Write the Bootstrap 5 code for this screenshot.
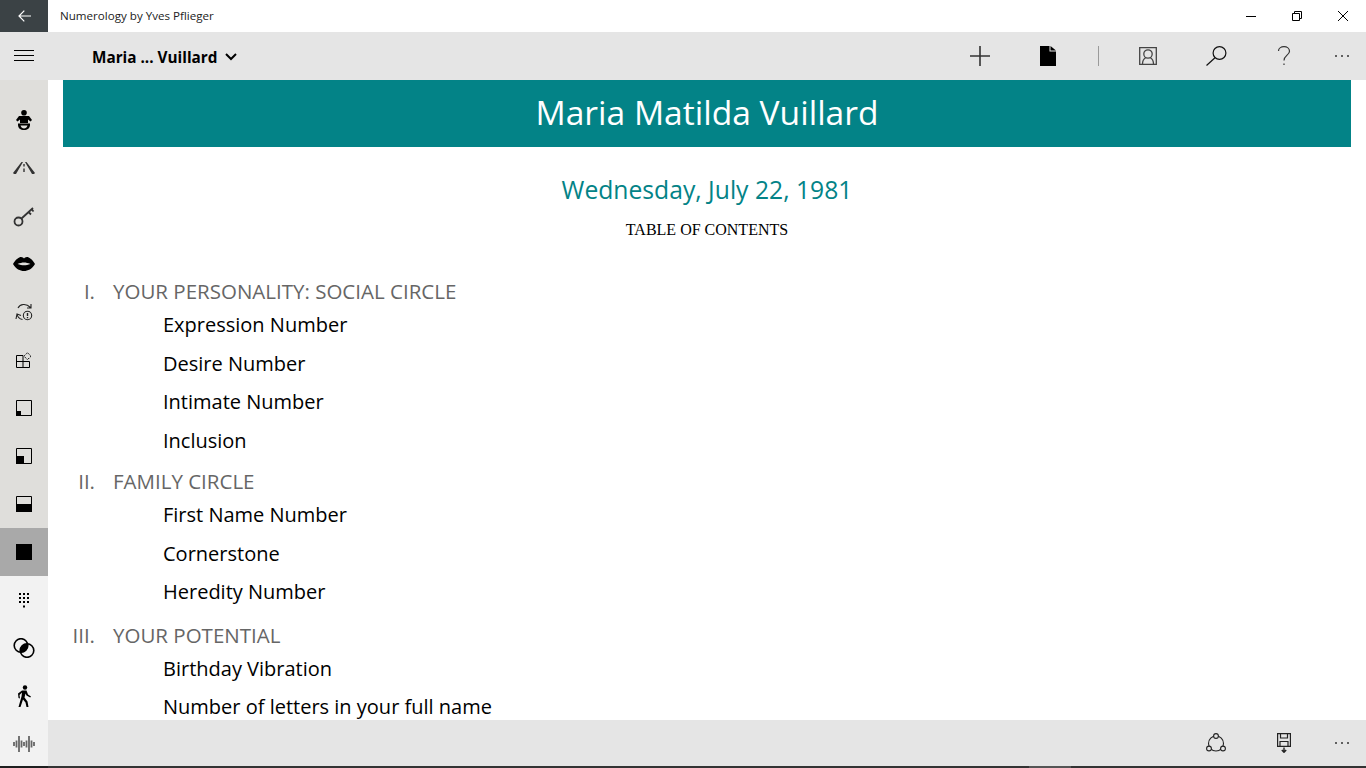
<!doctype html>
<html>
<head>
  <title>Numerology by Yves Pflieger</title>
  <link href="https://cdn.jsdelivr.net/npm/bootstrap@5.3.0/dist/css/bootstrap.min.css" rel="stylesheet">
  <style>
    html, body { height: 100%; overflow: hidden; }
    body { font-family: "Open Sans", "Noto Sans", sans-serif; color: #000; background: #fff; }
    .app-shell { width: 1366px; height: 768px; }
    .title-bar { height: 32px; background: #fff; }
    .back-box { width: 48px; height: 32px; background: #3b4245; }
    .app-title { font-size: 11.6px; margin-left: 12px; color: #222; }
    .win-btn { width: 46px; height: 32px; }
    .tool-bar { height: 48px; background: #e5e5e5; }
    .tool-btn { width: 68px; height: 48px; }
    .tool-last { width: 48px; }
    .burger { width: 48px; height: 48px; }
    .person-name { font-size: 15.3px; font-weight: 700; margin-left: 44px; padding-top: 2px; }
    .tool-gap { width: 32px; height: 20px; }
    .tool-sep { width: 1px; height: 20px; background: #9a9a9a; }
    .body-row { height: 686px; }
    .side-rail { width: 48px; }
    .rail-top { background: #dfdedb; height: 496px; padding-top: 16px; }
    .rail-low { background: #f2f2f2; height: 190px; }
    .rail-btn { height: 48px; }
    .rail-btn.is-active { background: #a9a9a9; }
    .doc-pane { height: 640px; overflow: hidden; padding: 0 15px; }
    .doc-banner { background: #038387; color: #fff; height: 67px; font-size: 33.6px; line-height: 64px; text-align: center; }
    .doc-date { color: #038387; font-size: 24.7px; line-height: 32px; text-align: center; margin-top: 27px; }
    .doc-toc { font-family: "Liberation Serif", serif; font-size: 16px; line-height: 20px; text-align: center; margin-top: 14px; margin-bottom: 37px; }
    .sec-row { display: flex; color: #666; font-size: 20.5px; line-height: 28px; padding-bottom: 6.4px; }
    .sec-near { padding-top: 2px; }
    .sec-far { padding-top: 4px; }
    .sec-num { width: 32px; text-align: right; margin-right: 18px; }
    .sub-item { font-size: 20px; line-height: 28px; padding-left: 100px; margin-bottom: 10.4px; }
    .bottom-bar { height: 46px; background: #e5e5e5; }
    .task-edge { height: 2px; background: #333; }
    .edge-left { width: 48px; background: #1f1f1f; }
    .edge-thumb { width: 42px; margin-left: 981px; background: #555; }
  </style>
</head>
<body>
<div class="app-shell d-flex flex-column">

  <div class="title-bar d-flex align-items-center">
    <div class="back-box d-flex align-items-center justify-content-center">
      <svg width="13" height="12" viewBox="0 0 13 12" fill="none" stroke="#fff" stroke-width="1.2"><path d="M1 6h12M6.300 .7 1 6l5.300 5.300"/></svg>
    </div>
    <div class="app-title">Numerology by Yves Pflieger</div>
    <div class="ms-auto d-flex">
      <div class="win-btn d-flex align-items-center justify-content-center">
        <svg width="10" height="10" viewBox="0 0 10 10" stroke="#000" fill="none"><path d="M0 5.500h10"/></svg>
      </div>
      <div class="win-btn d-flex align-items-center justify-content-center">
        <svg width="10" height="10" viewBox="0 0 10 10" stroke="#000" fill="none"><path d="M.5 2.500h7v7h-7zM2.500 2.500v-2h7v7h-2"/></svg>
      </div>
      <div class="win-btn d-flex align-items-center justify-content-center">
        <svg width="10" height="10" viewBox="0 0 10 10" stroke="#000" fill="none"><path d="M0 0l10 10M10 0 0 10"/></svg>
      </div>
    </div>
  </div>

  <div class="tool-bar d-flex align-items-center">
    <div class="burger d-flex align-items-center justify-content-center">
      <svg width="20" height="12" viewBox="0 0 20 12" stroke="#000" fill="none"><path d="M0 .5h20M0 5.500h20M0 10.500h20"/></svg>
    </div>
    <div class="person-name d-flex align-items-center">Maria ... Vuillard
      <svg class="ms-2" width="12" height="8" viewBox="0 0 12 8" fill="none" stroke="#000" stroke-width="2"><path d="M1 1l5 5 5-5"/></svg>
    </div>
    <div class="ms-auto d-flex align-items-center">
      <div class="tool-btn d-flex align-items-center justify-content-center">
        <svg width="20" height="20" viewBox="0 0 20 20" stroke="#333" stroke-width="1.600" fill="none"><path d="M0 10h20M10 0v20"/></svg>
      </div>
      <div class="tool-btn d-flex align-items-center justify-content-center">
        <svg width="16" height="20" viewBox="0 0 16 20"><path d="M0 0h9.500v5.500H16V20H0zM10.500 0 16 4.500h-5.500z" fill="#000"/></svg>
      </div>
      <div class="tool-gap d-flex justify-content-center"><div class="tool-sep"></div></div>
      <div class="tool-btn d-flex align-items-center justify-content-center">
        <svg width="18" height="18" viewBox="0 0 18 18" stroke="#444" stroke-width="1.300" fill="none"><path d="M.7.7h16.600v16.600H.7z"/><circle cx="9" cy="7" r="4.200"/><path d="M3.500 17c0-3.500 1.500-5.500 3.500-6.500M14.500 17c0-3.500-1.500-5.500-3.500-6.500"/></svg>
      </div>
      <div class="tool-btn d-flex align-items-center justify-content-center">
        <svg width="21" height="20" viewBox="0 0 21 20" stroke="#111" stroke-width="1.200" fill="none"><circle cx="13.500" cy="7" r="6.400"/><path d="M9 11.700.5 19.500"/></svg>
      </div>
      <div class="tool-btn d-flex align-items-center justify-content-center">
        <svg width="14" height="20" viewBox="0 0 14 20" stroke="#333" stroke-width="1.200" fill="none"><path d="M1.500 5C1.500 2.500 4 .7 7 .7s5.500 1.800 5.500 4.500C12.500 9 7 9.500 7 14.500"/><path d="M7 17.500v1.500"/></svg>
      </div>
      <div class="tool-btn tool-last d-flex align-items-center justify-content-center">
        <svg width="16" height="4" viewBox="0 0 16 4" fill="#333"><circle cx="2" cy="2" r="1"/><circle cx="8" cy="2" r="1"/><circle cx="14" cy="2" r="1"/></svg>
      </div>
    </div>
  </div>

  <div class="body-row d-flex">
    <div class="side-rail flex-shrink-0">
      <div class="rail-top">
        <div class="rail-btn d-flex align-items-center justify-content-center">
          <svg width="16" height="20" viewBox="0 0 16 20"><circle cx="8" cy="2.800" r="2.800"/><path d="M3 6h10l3 4-1.500 1.500-2.500-2V13H4V9.500l-2.500 2L0 10z"/><path fill-rule="evenodd" d="M2 13.500h12v1.500C14 18 11.500 20 8 20s-6-2-6-5zm2.500 2c.5 1.800 2 3 3.500 3s3-1.200 3.500-3z"/></svg>
        </div>
        <div class="rail-btn d-flex align-items-center justify-content-center">
          <svg width="22" height="12" viewBox="0 0 22 12" fill="#333"><path d="M0 11 8.500 0H10L3 12H1zM22 11 13.500 0H12l7 12h2zM10.300 2h1.400v2.500h-1.400zM10.300 6.500h1.400V10h-1.400z"/></svg>
        </div>
        <div class="rail-btn d-flex align-items-center justify-content-center">
          <svg width="22" height="22" viewBox="0 0 22 22" fill="none" stroke="#333" stroke-width="1.800"><circle cx="5.500" cy="16.500" r="4"/><path d="M8.500 13.500 20 3M15.500 7l2.500 2.500M18.500 4l2 2.500"/></svg>
        </div>
        <div class="rail-btn d-flex align-items-center justify-content-center">
          <svg width="22" height="14" viewBox="0 0 22 14"><path fill-rule="evenodd" d="M0 7C3 2 6 0 8 0c1.500 0 2.500 1 3 1.500C11.500 1 12.500 0 14 0c2 0 5 2 8 7-3 5-7 7-11 7S3 12 0 7zm4.500 0c2.500 1 4.500 1.300 6.500 1.300S15 8 17.500 7C15 6 13 5.500 11 5.500S7 6 4.500 7z"/></svg>
        </div>
        <div class="rail-btn d-flex align-items-center justify-content-center">
          <svg width="18" height="18" viewBox="0 0 18 18" fill="none" stroke="#222" stroke-width="1.100"><path d="M3 5C5 1 11 0 15.500 4.500M16 1v4h-4M2 11c.5 3 3 5 5.500 5.500M1 16l1-5 4 1.500"/><circle cx="12.500" cy="12.500" r="4.200"/><path d="M12.500 10v3M12.500 14v1.300" stroke-width="1.400"/></svg>
        </div>
        <div class="rail-btn d-flex align-items-center justify-content-center">
          <svg width="16" height="16" viewBox="0 0 16 16" fill="none" stroke="#000"><path d="M.5 3.500h6.500v12H.5zM.5 9.500h13v6H7"/><path d="M11.500.7 15 4.200l-3.500 3.500L8 4.200z" stroke-dasharray="1.500 1"/></svg>
        </div>
        <div class="rail-btn d-flex align-items-center justify-content-center">
          <svg width="16" height="16" viewBox="0 0 16 16"><path d="M.5.500h15v15H.5z" fill="none" stroke="#000"/><path d="M0 11h5v5H0z"/></svg>
        </div>
        <div class="rail-btn d-flex align-items-center justify-content-center">
          <svg width="16" height="16" viewBox="0 0 16 16"><path d="M.5.500h15v15H.5z" fill="none" stroke="#000"/><path d="M0 8h8v8H0z"/></svg>
        </div>
        <div class="rail-btn d-flex align-items-center justify-content-center">
          <svg width="16" height="16" viewBox="0 0 16 16"><path d="M.5.500h15v15H.5z" fill="none" stroke="#000"/><path d="M0 8h16v8H0z"/></svg>
        </div>
        <div class="rail-btn is-active d-flex align-items-center justify-content-center">
          <svg width="16" height="16" viewBox="0 0 16 16"><path d="M0 0h16v16H0z"/></svg>
        </div>
      </div>
      <div class="rail-low">
        <div class="rail-btn d-flex align-items-center justify-content-center">
          <svg width="11" height="15" viewBox="0 0 11 15"><path d="M0 0h2v2H0zM4 0h2v2H4zM8 0h2v2H8zM0 4h2v2H0zM4 4h2v2H4zM8 4h2v2H8zM0 8h2v2H0zM4 8h2v2H4zM8 8h2v2H8zM4 12.500h2v2H4z"/></svg>
        </div>
        <div class="rail-btn d-flex align-items-center justify-content-center">
          <svg width="22" height="20" viewBox="0 0 22 20" fill="none" stroke="#000" stroke-width="1.600">
            <clipPath id="lensClip"><circle cx="8" cy="7.500" r="7"/></clipPath>
            <circle cx="8" cy="7.500" r="6.800"/><circle cx="14" cy="12.500" r="6.800"/>
            <circle cx="14" cy="12.500" r="6.800" fill="#000" stroke="none" clip-path="url(#lensClip)"/>
          </svg>
        </div>
        <div class="rail-btn d-flex align-items-center justify-content-center">
          <svg width="14" height="22" viewBox="0 0 14 22"><circle cx="8" cy="2.500" r="2.200"/><path d="M5 5.500h4.500l1.500 4 3 2-.8 1-3.700-2-1-2-1 4 3 4 1 5.500H9.500l-1-4.500-2.500-3-2.500 7.500H1.500l3-10.500.5-4-2.500 2.500.5 3.500L1.500 13 1 8.500z"/></svg>
        </div>
        <div class="rail-btn d-flex align-items-center justify-content-center">
          <svg width="22" height="16" viewBox="0 0 22 16" stroke="#666" stroke-width="1.800" fill="none"><path d="M1 6v4M3.500 4.500v7M6 0v16M8.500 4.500v7M11 6v4M13.500 4.500v7M16 0v16M18.500 4.500v7M21 6v4"/></svg>
        </div>
      </div>
    </div>

    <div class="flex-grow-1 d-flex flex-column">
      <div class="doc-pane">
        <div class="doc-banner">Maria Matilda Vuillard</div>
        <div class="doc-date">Wednesday, July 22, 1981</div>
        <p class="doc-toc">TABLE OF CONTENTS</p>

        <div class="sec-row"><span class="sec-num">I.</span><span>YOUR PERSONALITY: SOCIAL CIRCLE</span></div>
        <div class="sub-item">Expression Number</div>
        <div class="sub-item">Desire Number</div>
        <div class="sub-item">Intimate Number</div>
        <div class="sub-item">Inclusion</div>

        <div class="sec-row sec-near"><span class="sec-num">II.</span><span>FAMILY CIRCLE</span></div>
        <div class="sub-item">First Name Number</div>
        <div class="sub-item">Cornerstone</div>
        <div class="sub-item">Heredity Number</div>

        <div class="sec-row sec-far"><span class="sec-num">III.</span><span>YOUR POTENTIAL</span></div>
        <div class="sub-item">Birthday Vibration</div>
        <div class="sub-item">Number of letters in your full name</div>
      </div>

      <div class="bottom-bar d-flex align-items-center justify-content-end">
        <div class="tool-btn d-flex align-items-center justify-content-center">
          <svg width="20" height="20" viewBox="0 0 20 20" fill="none" stroke="#222" stroke-width="1.100"><circle cx="10" cy="10.500" r="7.500"/><circle cx="10" cy="3" r="2.400" fill="#e5e5e5"/><circle cx="3" cy="15.500" r="2.400" fill="#e5e5e5"/><circle cx="17" cy="15.500" r="2.400" fill="#e5e5e5"/></svg>
        </div>
        <div class="tool-btn d-flex align-items-center justify-content-center">
          <svg width="14" height="20" viewBox="0 0 14 20" fill="none" stroke="#222" stroke-width="1.200"><path d="M.6.600h12.800v12.800H.6z"/><path d="M3.500.6v4.400h7V.6M3 13.400V8.500h8v4.900"/><path d="M7 14.500v4.500M4.800 17 7 19.300 9.200 17" stroke-width="1.400"/></svg>
        </div>
        <div class="tool-btn tool-last d-flex align-items-center justify-content-center">
          <svg width="16" height="4" viewBox="0 0 16 4" fill="#333"><circle cx="2" cy="2" r="1"/><circle cx="8" cy="2" r="1"/><circle cx="14" cy="2" r="1"/></svg>
        </div>
      </div>
    </div>
  </div>

  <div class="task-edge d-flex">
    <div class="edge-left"></div>
    <div class="edge-thumb"></div>
  </div>
</div>
<script src="https://cdn.jsdelivr.net/npm/bootstrap@5.3.0/dist/js/bootstrap.bundle.min.js"></script>
</body>
</html>
